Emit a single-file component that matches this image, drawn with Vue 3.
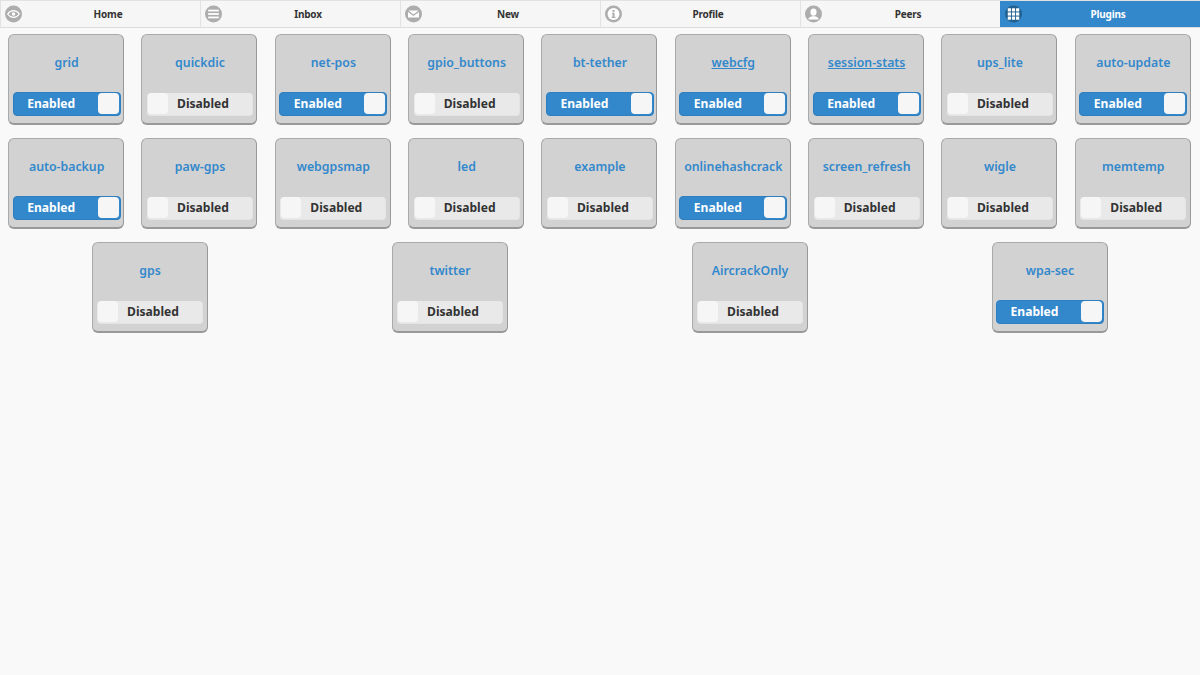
<script setup>
const tabs = [
  { label: 'Home', icon: 'eye' },
  { label: 'Inbox', icon: 'bars' },
  { label: 'New', icon: 'mail' },
  { label: 'Profile', icon: 'info' },
  { label: 'Peers', icon: 'user' },
  { label: 'Plugins', icon: 'grid', active: true },
]
const plugins = [
  ['grid', 1], ['quickdic', 0], ['net-pos', 1], ['gpio_buttons', 0], ['bt-tether', 1], ['webcfg', 1, 1], ['session-stats', 1, 1], ['ups_lite', 0], ['auto-update', 1],
  ['auto-backup', 1], ['paw-gps', 0], ['webgpsmap', 0], ['led', 0], ['example', 0], ['onlinehashcrack', 1], ['screen_refresh', 0], ['wigle', 0], ['memtemp', 0],
  ['gps', 0], ['twitter', 0], ['AircrackOnly', 0], ['wpa-sec', 1],
].map(([name, on, link]) => ({ name, on: !!on, link: !!link }))
</script>

<template>
  <div class="page">
    <nav class="nav">
      <a v-for="t in tabs" :key="t.label" class="tab" :class="{ active: t.active }">
        <span class="ico">
          <svg viewBox="0 0 16 16" width="17" height="17">
            <template v-if="t.icon === 'eye'">
              <path d="M2.5 8C4 5.8 5.8 4.8 8 4.8S12 5.8 13.5 8C12 10.2 10.2 11.2 8 11.2S4 10.2 2.5 8Z" fill="none" stroke="#fff" stroke-width="1.2"/>
              <circle cx="8" cy="8" r="1.7" fill="#fff"/>
            </template>
            <template v-else-if="t.icon === 'bars'">
              <rect x="3" y="3.9" width="10" height="1.7" fill="#fff"/>
              <rect x="3" y="7.15" width="10" height="1.7" fill="#fff"/>
              <rect x="3" y="10.4" width="10" height="1.7" fill="#fff"/>
            </template>
            <template v-else-if="t.icon === 'mail'">
              <path d="M3.2 4.8H12.8L8 8.4Z" fill="#fff"/>
              <path d="M2.8 6L8 9.9L13.2 6V11.4H2.8Z" fill="#fff"/>
            </template>
            <template v-else-if="t.icon === 'info'">
              <circle cx="8" cy="8" r="5.6" fill="#fff"/>
              <rect x="7" y="4.2" width="2" height="1.8" fill="#adadad"/>
              <path d="M6.6 6.9H9V10.7H9.8V11.8H6.3V10.7H7.1V8H6.6Z" fill="#adadad"/>
            </template>
            <template v-else-if="t.icon === 'user'">
              <ellipse cx="8" cy="6.2" rx="2.9" ry="3.4" fill="#fff"/>
              <path d="M3 13.2C3.4 11.2 5.2 10.4 6.6 10H9.4C10.8 10.4 12.6 11.2 13 13.2Z" fill="#fff"/>
            </template>
            <template v-else>
              <g fill="#fff">
                <rect v-for="c in 9" :key="c" :x="2.6 + ((c - 1) % 3) * 3.9" :y="2.6 + Math.floor((c - 1) / 3) * 3.9" width="3" height="3"/>
              </g>
            </template>
          </svg>
        </span>
        <span class="tab-label">{{ t.label }}</span>
      </a>
    </nav>
    <main class="grid">
      <section v-for="p in plugins" :key="p.name" class="card">
        <h4 class="title" :class="{ link: p.link }">{{ p.name }}</h4>
        <div class="flip" :class="p.on ? 'on' : 'off'">
          <template v-if="p.on">
            <span class="flip-text">Enabled</span>
            <span class="knob"></span>
          </template>
          <template v-else>
            <span class="knob"></span>
            <span class="flip-text">Disabled</span>
          </template>
        </div>
      </section>
    </main>
  </div>
</template>

<style>
html, body { margin: 0; background: #f9f9f9; }
</style>

<style scoped>
.page {
  width: 1200px;
  height: 675px;
  background: #f9f9f9;
  font-family: "Noto Sans", "Open Sans", sans-serif;
  overflow: hidden;
}
.nav {
  display: flex;
  height: 28px;
  box-sizing: border-box;
  border-top: 1px solid #e2e2e2;
  border-bottom: 1px solid #dddddd;
  background: #f6f6f6;
}
.tab {
  flex: 1 1 0;
  display: flex;
  align-items: center;
  justify-content: center;
  position: relative;
  box-sizing: border-box;
  border-left: 1px solid #e2e2e2;
  padding-left: 15px;
  font-size: 10px;
  letter-spacing: -0.2px;
  font-weight: 700;
  color: #333333;
}
.tab.active {
  background: #3388cc;
  color: #ffffff;
  border-left-color: #3388cc;
}
.ico {
  position: absolute;
  left: 4px;
  top: 50%;
  transform: translateY(-50%);
  width: 17px;
  height: 17px;
  border-radius: 50%;
  background: #adadad;
  display: flex;
}
.active .ico { background: #22608f; }
.grid {
  display: flex;
  flex-wrap: wrap;
  justify-content: space-around;
  align-content: flex-start;
  row-gap: 13px;
  padding-top: 6px;
}
.card {
  width: 116px;
  height: 91px;
  margin: 0 8.5px 0 7.5px;
  box-sizing: border-box;
  background: #d2d2d2;
  border: 1px solid #aaaaaa;
  border-right-color: #999999;
  border-bottom: 2px solid #999999;
  border-right-width: 1.5px;
  border-radius: 6px;
  padding: 4px 2.5px 7.5px 3.5px;
  display: flex;
  flex-direction: column;
  justify-content: space-between;
  align-items: stretch;
}
.title {
  margin: 0;
  height: 47px;
  line-height: 47px;
  text-align: center;
  font-size: 12.3px;
  font-weight: 600;
  color: #3388cc;
  white-space: nowrap;
}
.title.link { text-decoration: underline; }
.flip {
  display: flex;
  align-items: center;
  box-sizing: border-box;
  font-size: 12.1px;
  font-weight: 700;
  border-radius: 4px;
}
.flip.on {
  height: 24px;
  background: #3388cc;
  border: 1px solid #2f7fbf;
  padding-right: 1px;
  color: #ffffff;
}
.flip.off {
  height: 23px;
  margin-left: 1px;
  margin-right: 1px;
  padding-left: 1px;
  background: #e9e9e9;
  border: 1px solid #e4e4e4;
  border-width: 0 1px 1px 0;
  color: #333333;
}
.knob {
  width: 21px;
  height: 21px;
  flex: none;
  background: #f6f6f6;
  border-radius: 4px;
}
.off .knob { width: 20px; }
.flip-text {
  flex: 1;
  text-align: center;
}
.on .flip-text { padding-right: 9px; }
.off .flip-text { padding-right: 14px; }
</style>
